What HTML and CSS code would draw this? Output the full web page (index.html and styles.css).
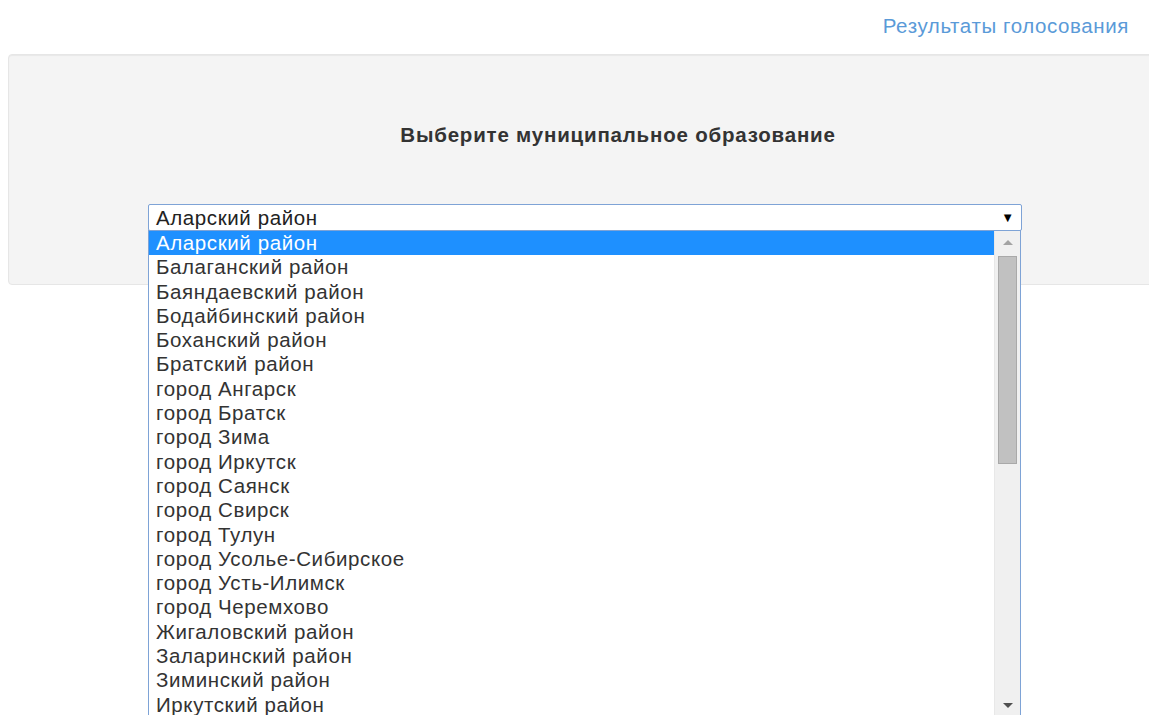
FILE: index.html
```html
<!DOCTYPE html>
<html lang="ru">
<head>
<meta charset="utf-8">
<title>Голосование</title>
<link rel="stylesheet" href="styles.css">
</head>
<body>
<div class="page">
  <div class="topbar">
    <a class="results-link" href="#">Результаты голосования</a>
  </div>
  <div class="well">
    <h2 class="title">Выберите муниципальное образование</h2>
    <div class="picker">
      <div class="picker-box">
        <span class="picker-value">Аларский район</span>
        <span class="picker-caret">&#9660;</span>
      </div>
      <div class="picker-menu">
        <ul class="options">
          <li class="option selected">Аларский район</li>
          <li class="option">Балаганский район</li>
          <li class="option">Баяндаевский район</li>
          <li class="option">Бодайбинский район</li>
          <li class="option">Боханский район</li>
          <li class="option">Братский район</li>
          <li class="option">город Ангарск</li>
          <li class="option">город Братск</li>
          <li class="option">город Зима</li>
          <li class="option">город Иркутск</li>
          <li class="option">город Саянск</li>
          <li class="option">город Свирск</li>
          <li class="option">город Тулун</li>
          <li class="option">город Усолье-Сибирское</li>
          <li class="option">город Усть-Илимск</li>
          <li class="option">город Черемхово</li>
          <li class="option">Жигаловский район</li>
          <li class="option">Заларинский район</li>
          <li class="option">Зиминский район</li>
          <li class="option">Иркутский район</li>
        </ul>
        <div class="scrollbar">
          <span class="scroll-arrow up"></span>
          <span class="scroll-thumb"></span>
          <span class="scroll-arrow down"></span>
        </div>
      </div>
    </div>
  </div>
</div>
</body>
</html>
```

FILE: styles.css
```css
html, body {
  margin: 0;
  padding: 0;
  height: 100%;
  overflow: hidden;
  background: #ffffff;
  font-family: "Liberation Sans", Arial, sans-serif;
  color: #333333;
}

.page {
  padding-left: 8px;
  width: 1220px;
}

.topbar {
  display: flex;
  justify-content: flex-end;
  height: 54px;
  padding-right: 99px;
}

.results-link {
  margin-top: 13px;
  font-size: 20.5px;
  letter-spacing: 0.6px;
  line-height: 26px;
  color: #5a9ad8;
  text-decoration: none;
}

.well {
  position: relative;
  height: 229px;
  background: #f4f4f4;
  border: 1px solid #e6e6e6;
  border-radius: 4px;
  box-shadow: inset 0 1px 1px rgba(0, 0, 0, 0.05);
}

.title {
  margin: 67px 0 0;
  text-align: center;
  font-size: 20.5px;
  letter-spacing: 0.8px;
  line-height: 26px;
  font-weight: bold;
  color: #333333;
}

.picker {
  position: relative;
  margin: 56px 0 0 139px;
  width: 874px;
}

.picker-box {
  display: flex;
  align-items: center;
  justify-content: space-between;
  box-sizing: border-box;
  height: 27px;
  padding: 0 7px 0 7px;
  background: #ffffff;
  border: 1px solid #7ea3d6;
  border-radius: 2px;
}

.picker-value {
  font-size: 20.5px;
  letter-spacing: 0.6px;
  line-height: 24px;
  color: #222222;
}

.picker-caret {
  font-size: 13px;
  color: #000000;
}

/* the open list hangs below the box, over the rest of the page */
.picker-menu {
  position: absolute;
  left: 0;
  top: 26px;
  z-index: 2;
  display: flex;
  box-sizing: border-box;
  width: 873px;
  height: 500px;
  background: #ffffff;
  border: 1px solid #7ea3d6;
  overflow: hidden;
}

.options {
  flex: 1;
  margin: 0;
  padding: 0;
  list-style: none;
}

.option {
  height: 24.3px;
  padding-left: 7px;
  font-size: 20.5px;
  letter-spacing: 0.6px;
  line-height: 24.3px;
  color: #333333;
  white-space: nowrap;
}

.option.selected {
  background: #1e90ff;
  color: #ffffff;
}

.scrollbar {
  position: relative;
  width: 25px;
  flex: 0 0 25px;
  height: 485px;
  background: #f0f0f0;
  border-left: 1px solid #e8e8e8;
}

.scroll-thumb {
  position: absolute;
  left: 3px;
  top: 25px;
  width: 17px;
  height: 206px;
  background: #c1c1c1;
  border: 1px solid #a9a9a9;
}

.scroll-arrow {
  position: absolute;
  left: 8px;
  width: 0;
  height: 0;
  border-left: 5px solid transparent;
  border-right: 5px solid transparent;
}

.scroll-arrow.up {
  top: 9px;
  border-bottom: 5px solid #a3a3a3;
}

.scroll-arrow.down {
  top: 472px;
  border-top: 5px solid #505050;
}
```
